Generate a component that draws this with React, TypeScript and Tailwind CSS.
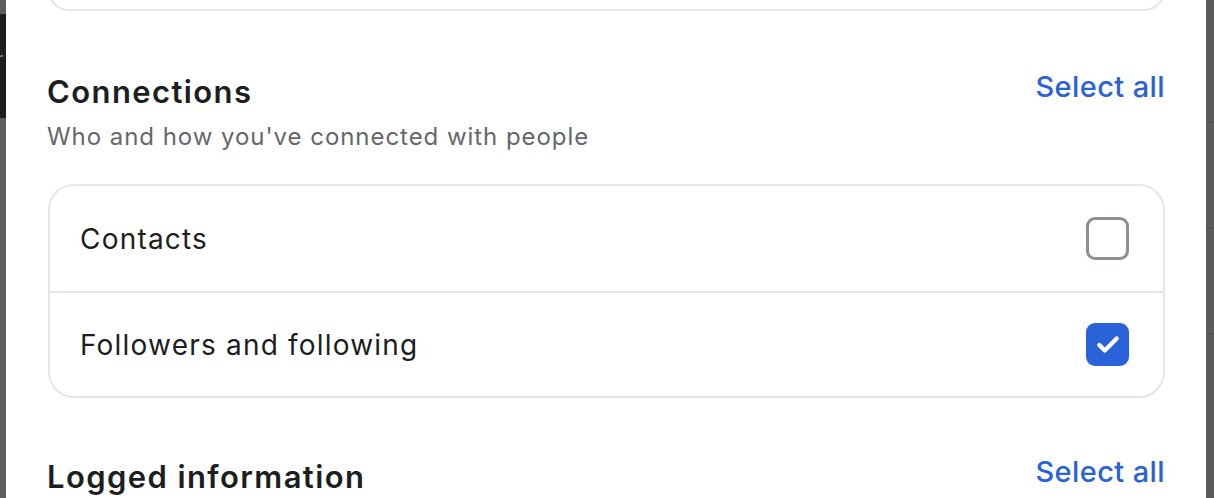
import { Check } from 'lucide-react'

interface Item {
  id: string
  label: string
  checked: boolean
}

const connections: Item[] = [
  { id: 'contacts', label: 'Contacts', checked: false },
  { id: 'followers', label: 'Followers and following', checked: true },
]

function Checkbox({ checked }: { checked: boolean }) {
  if (checked) {
    return (
      <div className="w-[43px] h-[43px] rounded-[9px] bg-[#2a62d9] flex items-center justify-center">
        <Check className="w-[26px] h-[26px] text-white" strokeWidth={4} />
      </div>
    )
  }
  return <div className="w-[43px] h-[43px] rounded-[9px] border-[3.5px] border-[#8d9096] bg-white" />
}

function SectionHeader({ title, subtitle }: { title: string; subtitle?: string }) {
  return (
    <div className="flex justify-between items-start">
      <div>
        <h2 className="text-[31px] leading-[38px] font-semibold tracking-[1.4px] text-[#1c1e21]">{title}</h2>
        {subtitle && (
          <p className="mt-[11px] text-[24px] leading-[30px] tracking-[0.95px] text-[#65676b]">{subtitle}</p>
        )}
      </div>
      <button className="-mt-[4px] text-[29px] leading-[36px] font-medium tracking-[0.4px] text-[#2a62d9]">
        Select all
      </button>
    </div>
  )
}

export default function App() {
  return (
    <div
      className="flex w-[1214px] h-[498px] overflow-hidden bg-white"
      style={{ fontFamily: 'Inter, "Liberation Sans", sans-serif' }}
    >
      {/* dimmed page behind the dialog */}
      <div className="w-[6px] flex flex-col">
        <div className="h-[14px] bg-[#5e5e5e]" />
        <div className="h-[104px] bg-[#1c1e1d] flex items-center overflow-hidden">
          <span className="text-[#7a7a7a] text-[20px] -ml-[4px] -mt-[14px]">r</span>
        </div>
        <div className="flex-1 bg-[#5e5e5e]" />
      </div>

      <div className="flex-1 px-[41px]">
        <div className="-mt-[30px] h-[41px] ml-[1px] border-2 border-[#e4e6eb] rounded-[26px]" />

        <div className="mt-[62px]">
          <SectionHeader title="Connections" subtitle="Who and how you've connected with people" />

          <div className="mt-[32px] border-2 border-[#e4e6eb] rounded-[26px] ml-[1px]">
            {connections.map((item, i) => (
              <div
                key={item.id}
                className={`h-[105px] flex items-center justify-between pl-[30px] pr-[34px] ${
                  i > 0 ? 'border-t-2 border-[#e4e6eb]' : ''
                }`}
              >
                <span className="text-[28px] tracking-[1.2px] text-[#1c1e21]">{item.label}</span>
                <Checkbox checked={item.checked} />
              </div>
            ))}
          </div>
        </div>

        <div className="mt-[60px]">
          <SectionHeader title="Logged information" />
        </div>
      </div>

      <div className="w-[8px] flex flex-col bg-[#5b5b5b]">
        {[0, 1, 2, 3, 4].map(n => (
          <div key={n} className="h-[106px] border-t-2 border-[#555555] first:h-[15px] first:border-t-0" />
        ))}
      </div>
    </div>
  )
}
